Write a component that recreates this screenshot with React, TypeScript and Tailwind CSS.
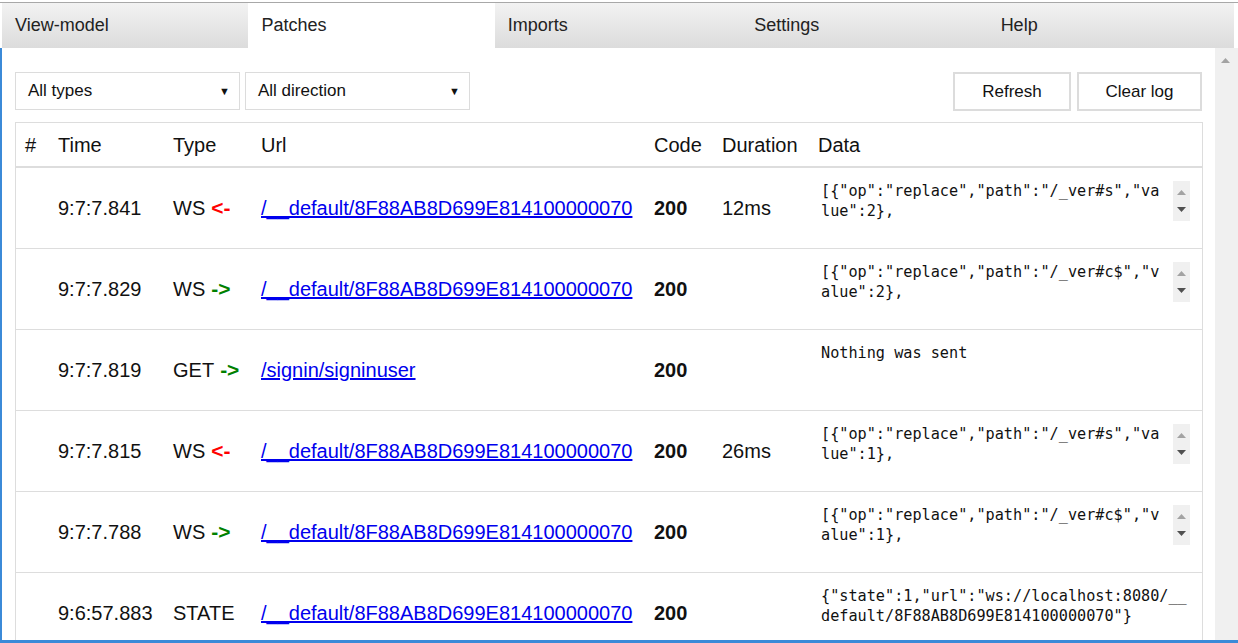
import React from 'react';

type Row = {
  time: string;
  type: string;
  dir: 'in' | 'out' | 'none';
  url: string;
  code: string;
  duration: string;
  data: string[];
  scroll: boolean;
};

const URL = '/__default/8F88AB8D699E814100000070';

const rows: Row[] = [
  { time: '9:7:7.841', type: 'WS', dir: 'in', url: URL, code: '200', duration: '12ms', data: ['[{"op":"replace","path":"/_ver#s","va', 'lue":2},'], scroll: true },
  { time: '9:7:7.829', type: 'WS', dir: 'out', url: URL, code: '200', duration: '', data: ['[{"op":"replace","path":"/_ver#c$","v', 'alue":2},'], scroll: true },
  { time: '9:7:7.819', type: 'GET', dir: 'out', url: '/signin/signinuser', code: '200', duration: '', data: ['Nothing was sent'], scroll: false },
  { time: '9:7:7.815', type: 'WS', dir: 'in', url: URL, code: '200', duration: '26ms', data: ['[{"op":"replace","path":"/_ver#s","va', 'lue":1},'], scroll: true },
  { time: '9:7:7.788', type: 'WS', dir: 'out', url: URL, code: '200', duration: '', data: ['[{"op":"replace","path":"/_ver#c$","v', 'alue":1},'], scroll: true },
  { time: '9:6:57.883', type: 'STATE', dir: 'none', url: URL, code: '200', duration: '', data: ['{"state":1,"url":"ws://localhost:8080/__', 'default/8F88AB8D699E814100000070"}'], scroll: false },
];

const tabs = ['View-model', 'Patches', 'Imports', 'Settings', 'Help'];

const cols = 'grid grid-cols-[32px_115px_88px_393px_68px_96px_1fr]';

function Triangle({ up, color }: { up: boolean; color: string }) {
  return (
    <svg width="9" height="5" viewBox="0 0 9 5">
      <path d={up ? 'M0 5 L4.5 0 L9 5 Z' : 'M0 0 L9 0 L4.5 5 Z'} fill={color} />
    </svg>
  );
}

function MiniScroll() {
  return (
    <div className="w-[17px] h-[40px] bg-[#f0f0f0] flex flex-col items-center justify-between py-[9px]">
      <Triangle up color="#a3a3a3" />
      <Triangle up={false} color="#505050" />
    </div>
  );
}

export default function App() {
  return (
    <div className="w-[1238px] h-[643px] overflow-hidden bg-white flex flex-col font-['Liberation_Sans',Arial,sans-serif] text-[#111]">
      <div className="h-[3px] shrink-0 border-b border-[#a8a8a8]" />
      {/* tabs */}
      <div className="flex ml-[2px] w-[1232px] h-[45px] shrink-0 bg-gradient-to-b from-[#f2f2f2] to-[#dcdcdc]">
        {tabs.map((t) => (
          <div
            key={t}
            className={
              t === 'Patches'
                ? 'flex-1 flex items-center pl-[13px] text-[18px] bg-white text-[#222]'
                : 'flex-1 flex items-center pl-[13px] text-[18px] text-[#222]'
            }
          >
            {t}
          </div>
        ))}
      </div>

      <div className="flex flex-1 min-h-0">
        <div className="flex-1 border-l-2 border-[#3b8ad8] pl-[13px] pr-[12px] pt-[24px] overflow-hidden">
          {/* filters */}
          <div className="flex items-start justify-between">
            <div className="flex gap-[5px]">
              <div className="w-[225px] h-[38px] border border-[#dcdcdc] flex items-center justify-between pl-[12px] pr-[9px] text-[17px]">
                <span>All types</span>
                <span className="text-[11px]">▼</span>
              </div>
              <div className="w-[225px] h-[38px] border border-[#dcdcdc] flex items-center justify-between pl-[12px] pr-[9px] text-[17px]">
                <span>All direction</span>
                <span className="text-[11px]">▼</span>
              </div>
            </div>
            <div className="flex gap-[6px] mr-[1px]">
              <button className="w-[118px] h-[39px] border-2 border-[#dcdcdc] bg-white text-[17px]">Refresh</button>
              <button className="w-[125px] h-[39px] border-2 border-[#dcdcdc] bg-white text-[17px]">Clear log</button>
            </div>
          </div>

          {/* table */}
          <div className="mt-[11px] border border-[#dddddd] text-[20px]">
            <div className={`${cols} h-[45px] items-center border-b-2 border-[#dddddd]`}>
              <div className="pl-[9px]">#</div>
              <div className="pl-[10px]">Time</div>
              <div className="pl-[10px]">Type</div>
              <div className="pl-[10px]">Url</div>
              <div className="pl-[10px]">Code</div>
              <div className="pl-[10px]">Duration</div>
              <div className="pl-[10px]">Data</div>
            </div>
            {rows.map((r, i) => (
              <div key={i} className={`${cols} h-[81px] border-b border-[#dddddd]`}>
                <div />
                <div className="pl-[10px] flex items-center">{r.time}</div>
                <div className="pl-[10px] flex items-center gap-[6px]">
                  <span>{r.type}</span>
                  {r.dir === 'in' && <span className="font-bold text-[21px] text-[#ff0000]">&lt;-</span>}
                  {r.dir === 'out' && <span className="font-bold text-[21px] text-[#008000]">-&gt;</span>}
                </div>
                <div className="pl-[10px] flex items-center">
                  <a className="text-[#0000ee] underline">{r.url}</a>
                </div>
                <div className="pl-[10px] flex items-center font-bold">{r.code}</div>
                <div className="pl-[10px] flex items-center">{r.duration}</div>
                <div className="pl-[13px] pt-[13px] flex items-start">
                  <div className="w-[352px] font-['DejaVu_Sans_Mono',monospace] text-[15.2px] leading-[20px] whitespace-pre text-[#111]">
                    {r.data.map((l, j) => (
                      <div key={j}>{l}</div>
                    ))}
                  </div>
                  {r.scroll && <MiniScroll />}
                </div>
              </div>
            ))}
          </div>
        </div>
        {/* page scrollbar */}
        <div className="w-[23px] shrink-0 bg-[#f0f0f0] flex flex-col items-center pt-[10px] pr-[3px]">
          <Triangle up color="#a3a3a3" />
        </div>
      </div>
      <div className="h-[3px] shrink-0 bg-[#3b8ad8]" />
    </div>
  );
}
